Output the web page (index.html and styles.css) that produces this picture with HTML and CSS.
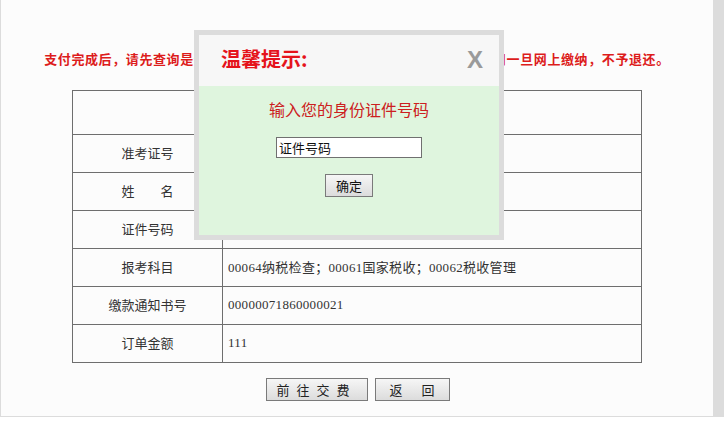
FILE: index.html
```html
<!DOCTYPE html>
<html lang="zh-CN">
<head>
<meta charset="utf-8">
<title>缴费确认</title>
<link rel="stylesheet" href="styles.css">
</head>
<body>
<div class="page">
  <p class="notice">支付完成后，请先查询是否缴费成功，若已缴费成功请勿重复支付。报考费用一旦网上缴纳，不予退还。</p>
  <table class="info">
    <tr class="head"><td colspan="2"></td></tr>
    <tr><td class="label">准考证号</td><td class="value"></td></tr>
    <tr><td class="label">姓　　名</td><td class="value"></td></tr>
    <tr><td class="label">证件号码</td><td class="value"></td></tr>
    <tr><td class="label">报考科目</td><td class="value">00064纳税检查；00061国家税收；00062税收管理</td></tr>
    <tr><td class="label">缴款通知书号</td><td class="value">00000071860000021</td></tr>
    <tr><td class="label">订单金额</td><td class="value">111</td></tr>
  </table>
  <div class="actions">
    <button class="btn btn-pay">前往交费</button>
    <button class="btn btn-back">返　回</button>
  </div>

  <div class="modal">
    <div class="modal-head">
      <span class="modal-title">温馨提示:</span>
      <span class="modal-close">X</span>
    </div>
    <div class="modal-body">
      <div class="modal-msg">输入您的身份证件号码</div>
      <input class="id-input" type="text" value="证件号码">
      <button class="ok-btn">确定</button>
    </div>
  </div>
</div>
</body>
</html>
```

FILE: styles.css
```css
html, body {
  margin: 0;
  padding: 0;
  background: #ffffff;
}

.page {
  position: relative;
  width: 712px;
  background: #fcfcfc;
  border-left: 1px solid #dcdcdc;
  border-right: 11px solid #dcdcdc;
  border-bottom: 1px solid #dcdcdc;
  padding: 49px 0 15px;
  font-family: "Liberation Serif", "Noto Sans CJK SC", sans-serif;
}

.notice {
  margin: 0;
  height: 20px;
  line-height: 20px;
  text-align: center;
  color: #dd1c1c;
  font-weight: bold;
  font-size: 13px;
  letter-spacing: 0.6px;
  font-family: "Noto Sans CJK SC", sans-serif;
}

.info {
  margin: 21px auto 0;
  width: 570px;
  border-collapse: collapse;
  border: 1px solid #6e6e6e;
}

.info td {
  border: 1px solid #6e6e6e;
  height: 35px;
  padding: 0 0 2px;
  font-size: 13px;
  color: #333;
}

.info tr.head td {
  height: 41px;
}

.info .label {
  width: 149px;
  text-align: center;
  font-family: "Noto Sans CJK SC", sans-serif;
}

.info .value {
  padding-left: 5px;
  letter-spacing: 0.3px;
  font-family: "Liberation Serif", "Noto Sans CJK SC", sans-serif;
}

.actions {
  margin-top: 15px;
  display: flex;
  justify-content: center;
  gap: 7px;
  padding-left: 1px;
}

.btn {
  height: 23px;
  padding: 0;
  border: 1px solid #7a7a7a;
  background: linear-gradient(#f6f6f6, #dcdcdc);
  font-family: "Noto Sans CJK SC", sans-serif;
  font-size: 13px;
  color: #222;
  line-height: 21px;
}

.btn-pay {
  width: 102px;
  letter-spacing: 7px;
}

.btn-back {
  width: 75px;
  letter-spacing: 3px;
  padding-left: 3px;
}

.modal {
  position: absolute;
  left: 193px;
  top: 30px;
  width: 300px;
  height: 200px;
  border: 5px solid #dcdcdc;
  display: flex;
  flex-direction: column;
}

.modal-head {
  height: 51px;
  background: #f7f7f7;
  display: flex;
  align-items: center;
  justify-content: space-between;
  padding: 0 16px 0 22px;
}

.modal-title {
  color: #e5131b;
  font-size: 20px;
  font-weight: bold;
  font-family: "Noto Sans CJK SC", sans-serif;
  line-height: 24px;
  padding-bottom: 3px;
}

.modal-close {
  color: #9a9a9a;
  font-size: 24px;
  font-weight: bold;
  font-family: "Liberation Sans", sans-serif;
  line-height: 24px;
  padding-bottom: 1px;
}

.modal-body {
  flex: 1;
  background: #dff5de;
  display: flex;
  flex-direction: column;
  align-items: center;
  padding-top: 12px;
}

.modal-msg {
  color: #cc2020;
  font-size: 16px;
  line-height: 22px;
  font-family: "Noto Sans CJK SC", sans-serif;
}

.id-input {
  margin-top: 17px;
  width: 146px;
  height: 21px;
  box-sizing: border-box;
  border: 1px solid #707070;
  background: #fff;
  padding: 0 2px;
  font-size: 13px;
  font-family: "Noto Sans CJK SC", sans-serif;
  color: #111;
}

.ok-btn {
  margin-top: 16px;
  width: 48px;
  height: 23px;
  padding: 0;
  border: 1px solid #7a7a7a;
  background: linear-gradient(#f6f6f6, #dcdcdc);
  font-size: 13px;
  line-height: 21px;
  font-family: "Noto Sans CJK SC", sans-serif;
  color: #111;
}
```
